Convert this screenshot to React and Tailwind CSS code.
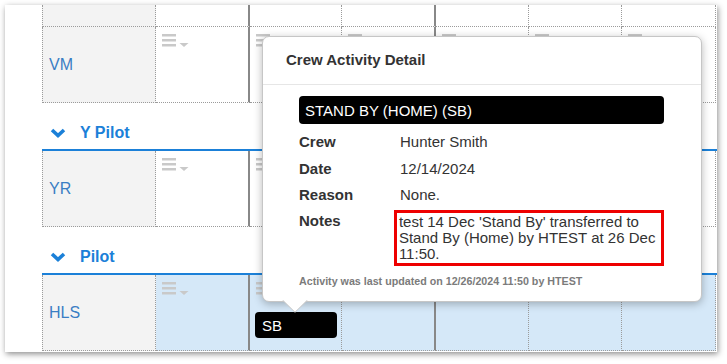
import React from "react";

const COLS = [
  { w: "w-[94px]", solid: true },
  { w: "w-[92px]", solid: false },
  { w: "w-[94px]", solid: true },
  { w: "w-[93px]", solid: false },
  { w: "w-[93px]", solid: false },
  { w: "w-[94px]", solid: false },
];

function MenuIcon() {
  return (
    <svg width="27" height="13" viewBox="0 0 27 13" className="block shrink-0">
      <rect x="0" y="0" width="14" height="2.5" fill="#c9c9c9" />
      <rect x="0" y="5" width="14" height="2.5" fill="#c9c9c9" />
      <rect x="0" y="10" width="14" height="2.5" fill="#c9c9c9" />
      <polygon points="17.5,9 26.5,9 22,13" fill="#c9c9c9" />
    </svg>
  );
}

function DataCell({ col, icons, highlight, sb }) {
  const base =
    "h-full border-b border-r border-dotted border-[#9b9b9b] flex flex-col pt-[7px] pl-[6px] " +
    (highlight ? "bg-[#d5e8f8] " : "bg-white ");
  const solid = col.solid ? "border-r-2 border-r-[#888888] [border-right-style:solid] " : "";
  return (
    <div className={base + solid + col.w}>
      {icons && <MenuIcon />}
      {sb && (
        <div className="mt-[17px] -ml-[1px] w-[82px] h-[26px] bg-black rounded-[4px] flex items-center pl-[7px] text-white text-[15px] leading-none">
          SB
        </div>
      )}
    </div>
  );
}

function Row({ h = "h-[76px]", name, icons, highlight, sb }) {
  return (
    <div className={"flex " + h}>
      <div className="w-[114px] h-full bg-[#f3f3f3] border-l border-r border-b border-dotted border-[#9b9b9b] flex items-center pl-[6px] text-[16px] text-[#3a7ec4]">
        {name}
      </div>
      {COLS.map((c, i) => (
        <DataCell
          key={i}
          col={c}
          icons={icons}
          highlight={highlight}
          sb={sb && i === 1}
        />
      ))}
    </div>
  );
}

function Header({ label }) {
  return (
    <div className="h-[48px] w-[676px] border-b-2 border-[#1b80d8] flex items-end pb-[7px]">
      <div className="flex items-center">
        <svg width="16" height="10" viewBox="0 0 16 10" className="ml-[8px] mt-[-1px]">
          <path d="M2 2 L8 7.5 L14 2" fill="none" stroke="#1b80d8" strokeWidth="3.6" />
        </svg>
        <span className="ml-[14px] text-[16px] leading-[18px] font-bold text-[#1b80d8]">
          {label}
        </span>
      </div>
    </div>
  );
}

function Popover() {
  return (
    <div className="absolute left-[257px] top-[31px] w-[440px] bg-white border border-[#c6c6c6] rounded-[7px] shadow-[0_2px_8px_rgba(0,0,0,0.28)] text-[#333333]">
      <div className="h-[48px] border-b border-[#e6e6e6] flex items-center pl-[23px] text-[15px] font-bold">
        Crew Activity Detail
      </div>
      <div className="pl-[36px] pr-[37px] pt-[11px] pb-[13px]">
        <div className="h-[28px] w-[365px] bg-black rounded-[4px] flex items-center pl-[6px] text-white text-[15px] leading-none">
          STAND BY (HOME) (SB)
        </div>
        <div className="text-[15px] leading-[16px]">
          <div className="flex mt-[10px]">
            <div className="w-[101px] font-bold">Crew</div>
            <div>Hunter Smith</div>
          </div>
          <div className="flex mt-[11px]">
            <div className="w-[101px] font-bold">Date</div>
            <div>12/14/2024</div>
          </div>
          <div className="flex mt-[10px]">
            <div className="w-[101px] font-bold">Reason</div>
            <div>None.</div>
          </div>
          <div className="flex mt-[7px]">
            <div className="w-[101px] font-bold pt-[3px]">Notes</div>
            <div className="-ml-[5px] w-[273px] border-[3px] border-[#ee0000] pl-[2px] pr-[4px] pt-[1px] pb-[1px]">
              test 14 Dec 'Stand By' transferred to Stand By (Home) by HTEST at 26 Dec 11:50.
            </div>
          </div>
        </div>
        <div className="mt-[9px] text-[10.7px] leading-[13px] font-bold text-[#7b7b7b]">
          Activity was last updated on 12/26/2024 11:50 by HTEST
        </div>
      </div>
      <svg
        width="26"
        height="13"
        viewBox="0 0 26 13"
        className="absolute left-[19px] top-[calc(100%-1px)]"
      >
        <path d="M0.5 0 L13 12.3 L25.5 0" fill="#ffffff" stroke="#c6c6c6" strokeWidth="1" />
      </svg>
    </div>
  );
}

export default function App() {
  return (
    <div className="w-[727px] h-[364px] bg-white overflow-hidden font-['Liberation_Sans',Arial,sans-serif]">
      <div className="relative ml-[5px] mt-[5px] w-[712px] h-[347px] bg-white shadow-[1px_2px_6px_rgba(0,0,0,0.45)] overflow-hidden">
        <div className="ml-[37px] flex flex-col">
          <Row h="h-[22px]" />
          <Row name="VM" icons />
          <Header label="Y Pilot" />
          <Row name="YR" icons />
          <Header label="Pilot" />
          <Row name="HLS" icons highlight sb />
        </div>
        <Popover />
      </div>
    </div>
  );
}
